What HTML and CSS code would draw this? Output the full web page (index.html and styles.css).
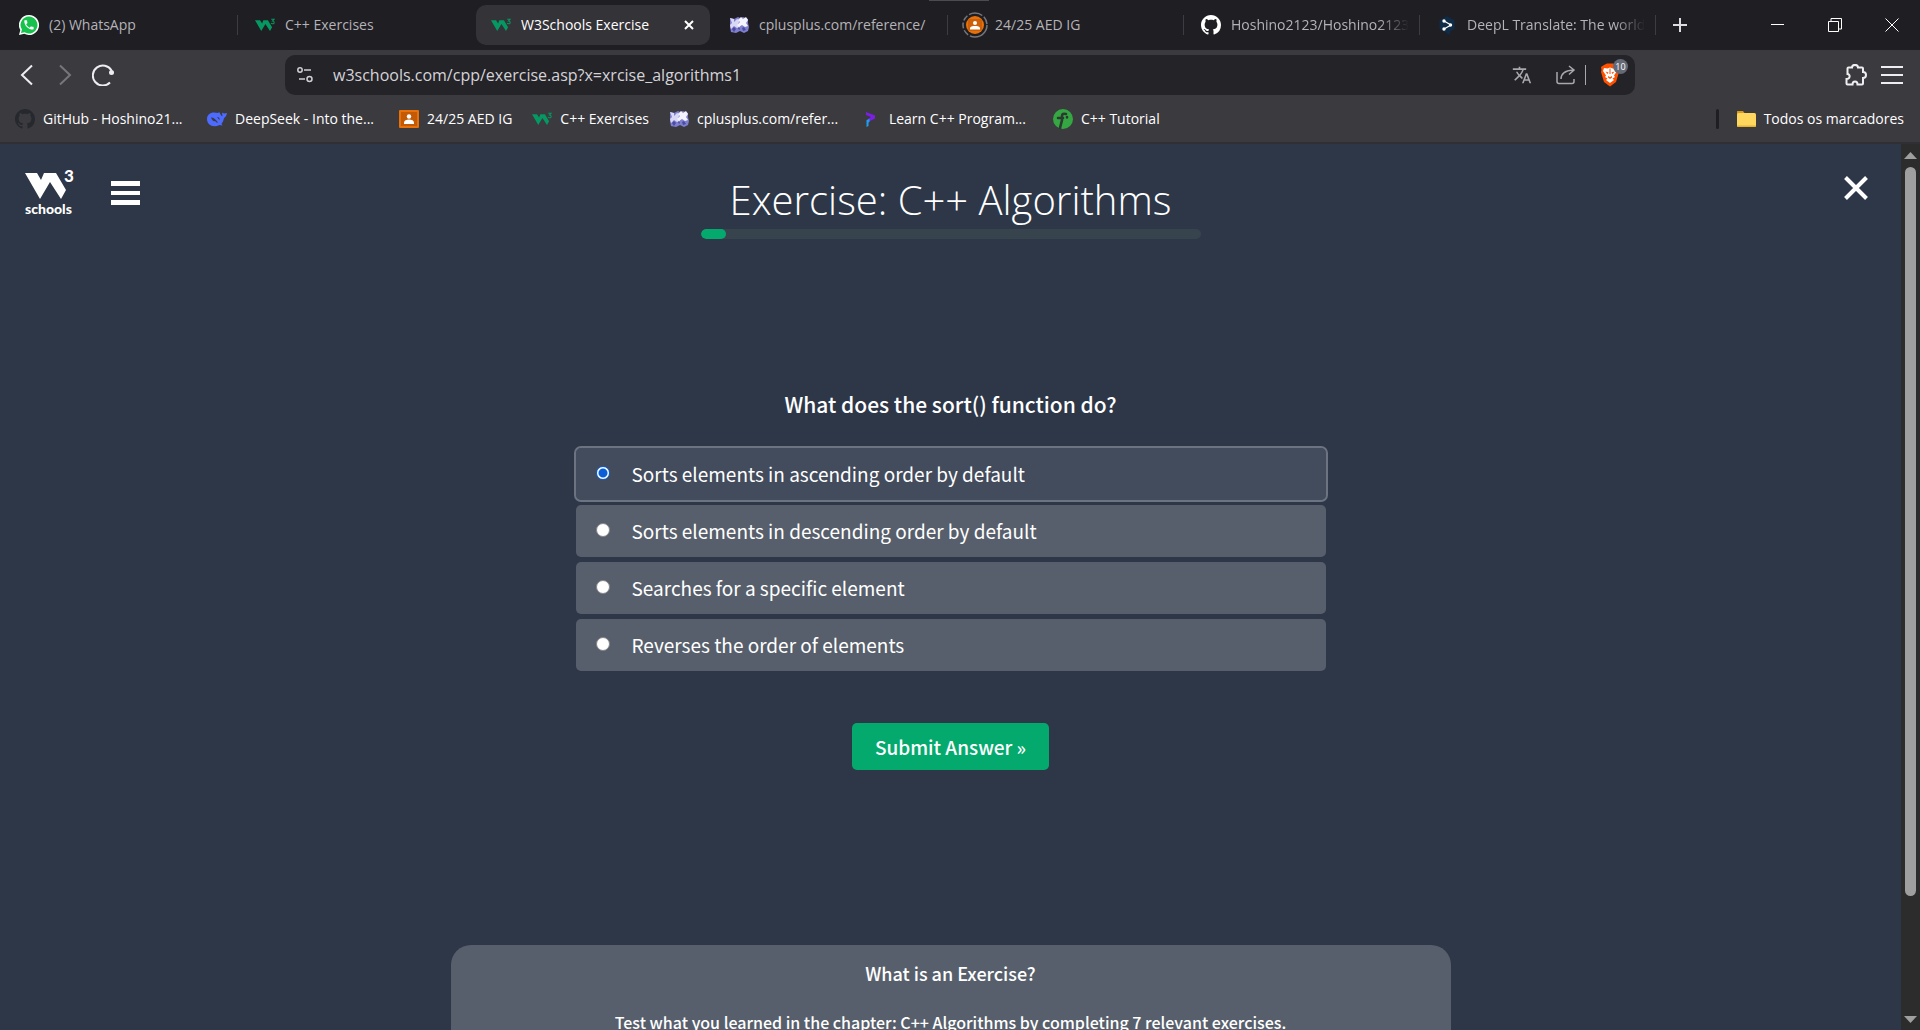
FILE: index.html
```html
<!DOCTYPE html>
<html lang="en">
<head>
<meta charset="utf-8">
<meta name="viewport" content="width=device-width, initial-scale=1">
<title>W3Schools Exercise</title>
<link rel="stylesheet" href="styles.css">
</head>
<body>
<svg class="sprite" aria-hidden="true">
  <symbol id="i-w3" viewBox="0 0 48 31"><path fill="#059862" d="M0 4h12l5 8 3-8h11l10 17-5 9-11-17-10 17z"/><path fill="none" stroke="#059862" stroke-width="2.500" d="M39 1.500h7l-4 4.500q4 0 4 3.500t-4 3q-2 0-3.500-1.500"/></symbol>
  <symbol id="i-github" viewBox="0 0 16 16"><path fill="currentColor" d="M8 0C3.58 0 0 3.58 0 8c0 3.54 2.29 6.53 5.47 7.59.4.07.55-.17.55-.38 0-.19-.01-.82-.01-1.49-2.01.37-2.53-.49-2.69-.94-.09-.23-.48-.94-.82-1.13-.28-.15-.68-.52-.01-.53.63-.01 1.08.58 1.23.82.72 1.21 1.87.87 2.33.66.07-.52.28-.87.51-1.07-1.78-.2-3.64-.89-3.64-3.95 0-.87.31-1.59.82-2.15-.08-.2-.36-1.02.08-2.12 0 0 .67-.21 2.2.82.64-.18 1.32-.27 2-.27s1.36.09 2 .27c1.53-1.04 2.2-.82 2.2-.82.44 1.1.16 1.92.08 2.12.51.56.82 1.27.82 2.15 0 3.07-1.87 3.75-3.65 3.95.29.25.54.73.54 1.48 0 1.07-.01 1.93-.01 2.2 0 .21.15.46.55.38A8.01 8.01 0 0 0 16 8c0-4.42-3.58-8-8-8z"/></symbol>
  <symbol id="i-cplus" viewBox="0 0 20 18">
    <path fill="#7f7fd0" d="M1 2l4 1 4-2 2 1 3-1 5 2v4l1 4-1 4-4 2-4-2-4 2-5-1-1-5z"/>
    <path fill="#d9d9f6" d="M1 2l4 1v3l3-3 3 1-2 4 2 3-3 1-3-2-3 3-1-4 2-2z"/>
    <path fill="#f4f4ff" d="M9 4l3-3 2 2 3-2 2 3-2 3 2 3-3 1-3-2-3 2-2-2 3-3z"/>
    <path fill="#4b4ba0" d="M3 13l2-2 2 2-2 3zM13 12l2-1 2 3-3 1zM9 12l1-1 1 2-1 1z"/>
  </symbol>
  <symbol id="i-class" viewBox="0 0 20 18"><rect width="20" height="18" rx="1" fill="#e8710a"/><rect x="2" y="2" width="16" height="14" fill="#c45a06"/><circle cx="10" cy="6.500" r="2.200" fill="#fff"/><path fill="#fff" d="M5 14v-1.500c0-2 2.500-3 5-3s5 1 5 3V14z"/></symbol>
</svg>

<header class="browser">
  <div class="tabstrip">
    <span class="grip"></span>
    <nav class="tabs" aria-label="Tabs">
      <a class="tab ruled" href="#">
        <svg class="fav" viewBox="0 0 20 20"><path fill="#fff" d="M10 0a10 10 0 1 1-4.700 18.800L0 20l1.300-5A10 10 0 0 1 10 0z"/><path fill="#16c14c" d="M10 1.500a8.500 8.500 0 1 1-4.400 15.800L2 18.100l.9-3.500A8.500 8.500 0 0 1 10 1.500z"/><g transform="translate(3.700 3.700) scale(.52)"><path fill="#fff" d="M6.620 10.790c1.440 2.830 3.760 5.140 6.590 6.590l2.200-2.200c.27-.27.67-.36 1.020-.24 1.120.37 2.330.57 3.570.57.55 0 1 .45 1 1V20c0 .55-.45 1-1 1-9.390 0-17-7.610-17-17 0-.55.45-1 1-1h3.500c.55 0 1 .45 1 1 0 1.250.2 2.450.57 3.570.11.35.03.74-.25 1.020l-2.200 2.200z"/></g></svg>
        <span class="tab-title">(2) WhatsApp</span>
      </a>
      <a class="tab" href="#">
        <svg class="fav"><use href="#i-w3"/></svg>
        <span class="tab-title">C++ Exercises</span>
      </a>
      <a class="tab active" href="#" aria-current="page">
        <svg class="fav"><use href="#i-w3"/></svg>
        <span class="tab-title">W3Schools Exercise</span>
        <svg class="tab-close" viewBox="0 0 10 10"><path d="M1 1l8 8M9 1L1 9"/></svg>
      </a>
      <a class="tab ruled" href="#">
        <svg class="fav"><use href="#i-cplus"/></svg>
        <span class="tab-title">cplusplus.com/reference/</span>
      </a>
      <a class="tab ruled" href="#">
        <svg class="fav fav-ring" viewBox="0 0 26 26"><circle cx="13" cy="13" r="12" fill="none" stroke="#77767b" stroke-width="1.500" stroke-dasharray="24 2 6 2 6 2 6 2 14 2 8 2"/><circle cx="13" cy="13" r="9" fill="#e8710a"/><rect x="6" y="7" width="14" height="12" rx="2" fill="#cc5f08"/><circle cx="13" cy="11" r="2" fill="#fff"/><path fill="#fff" d="M8 17.500v-1c0-2 2.500-2.500 5-2.500s5 .5 5 2.500v1z"/></svg>
        <span class="tab-title">24/25 AED IG</span>
      </a>
      <a class="tab ruled" href="#">
        <svg class="fav gh-light"><use href="#i-github"/></svg>
        <span class="tab-title fade">Hoshino2123/Hoshino2123</span>
      </a>
      <a class="tab ruled" href="#">
        <svg class="fav" viewBox="0 0 20 20"><path fill="#0f2b46" d="M10 1l7.500 4.300v8.700L13 16.600V20l-3.500-2L2.500 14V5.300z"/><path d="M7 6l7 4-7 4" fill="none" stroke="#fff" stroke-width="1.200"/><circle cx="7" cy="6" r="1.700" fill="#fff"/><circle cx="13.500" cy="10" r="1.700" fill="#fff"/><circle cx="7" cy="14" r="1.700" fill="#fff"/></svg>
        <span class="tab-title fade">DeepL Translate: The world</span>
      </a>
    </nav>
    <button class="new-tab" aria-label="New tab"><svg viewBox="0 0 14 14"><path d="M7 0v14M0 7h14"/></svg></button>
    <div class="window-controls">
      <button aria-label="Minimize"><svg viewBox="0 0 14 14"><path d="M0 6.500h13"/></svg></button>
      <button aria-label="Restore"><svg viewBox="0 0 14 14"><path d="M.5 3.500h10v10H.5zM3 3.500V.5h10.500V11h-3"/></svg></button>
      <button aria-label="Close window"><svg viewBox="0 0 14 14"><path d="M.5.5l13 13M13.500.5l-13 13"/></svg></button>
    </div>
  </div>

  <div class="toolbar">
    <div class="nav-buttons">
      <button aria-label="Back"><svg viewBox="0 0 22 22"><path d="M16 1.500L6 11l10 9.500"/></svg></button>
      <button aria-label="Forward" class="dim"><svg viewBox="0 0 22 22"><path d="M6 1.500L16 11 6 20.500"/></svg></button>
      <button aria-label="Reload"><svg viewBox="0 0 22 22"><path d="M19.500 6.500A10 10 0 1 0 18 18.500"/><circle cx="19.500" cy="8.500" r="2.500" fill="currentColor" stroke="none"/></svg></button>
    </div>
    <div class="address">
      <svg class="site-icon" viewBox="0 0 16 16"><circle cx="3" cy="3" r="2.200"/><path d="M7 3h7M2 12h6"/><circle cx="12.500" cy="12" r="2.500"/></svg>
      <input class="url" type="text" aria-label="Address" value="w3schools.com/cpp/exercise.asp?x=xrcise_algorithms1">
      <button class="addr-btn" aria-label="Translate"><svg class="solid" viewBox="0 0 24 24"><path d="M12.870 15.070l-2.540-2.510.03-.03c1.740-1.940 2.980-4.170 3.710-6.530H17V4h-7V2H8v2H1v1.990h11.170C11.500 7.920 10.440 9.750 9 11.350 8.070 10.320 7.300 9.190 6.690 8h-2c.73 1.630 1.730 3.170 2.980 4.560l-5.090 5.020L4 19l5-5 3.110 3.110.76-2.040zM18.500 10h-2L12 22h2l1.120-3h4.750L21 22h2l-4.500-12zm-2.620 7l1.620-4.330L19.120 17h-3.240z"/></svg></button>
      <button class="addr-btn share" aria-label="Share"><svg viewBox="0 0 20 20"><path d="M1 7v9.500q0 2 2 2h13q2 0 2-2V14M5 14q0-8 12-9M13 1l5 4-5 4.500"/></svg></button>
      <span class="addr-rule"></span>
      <button class="addr-btn shield" aria-label="Shields">
        <svg viewBox="0 0 20 24"><path fill="#ff5000" d="M4 2l3-1.500h6L16 2l3 2-.5 3 .5 2-3 10-6 4.500L4 19 1 9l.5-2L1 4z"/><path fill="#fff" d="M4 5l3.500.5L10 4.500l2.500 1L16 5l1 3-3 4.500 1 1.500-2.500 1.500L14 17l-4 3-4-3 1.500-1.500L5 14l1-1.500L3 8z"/><path fill="#ff5000" d="M5.500 8.500l3 1-1 1.500zM14.500 8.500l-3 1 1 1.500zM8 13l2 1.300L12 13v1.500l-2 1.500-2-1.500zM9.500 5.500h1V11h-1z"/></svg>
        <span class="badge">10</span>
      </button>
    </div>
    <div class="menu-buttons">
      <button aria-label="Extensions"><svg viewBox="0 0 22 22"><path d="M2.500 4.500q0-1 1-1H7C7 0 13 0 13 3.500h4q1 0 1 1V8c4 0 4 6 0 6v5.500q0 1-1 1h-4.500c0-4-5-4-5 0H2.500q-1 0-1-1V15c4 0 4-5 1-5z"/></svg></button>
      <button aria-label="Menu"><svg viewBox="0 0 22 22"><path d="M0 3h22M0 11h22M0 19h22"/></svg></button>
    </div>
  </div>

  <nav class="bookmarks" aria-label="Bookmarks">
    <a class="mark wide" href="#"><svg class="fav gh-dark"><use href="#i-github"/></svg>GitHub - Hoshino21...</a>
    <a class="mark wide" href="#"><svg class="fav" viewBox="0 0 20 16"><path fill="#4d6bfe" d="M0 8c0-4 3-6.500 7-6.500l4 .5c1-1 1.500-1 2 .5 1 2 2 3 2.500 2.500C15 3 15 2 15.500 1.500c1 1.500 2.500 1 4.500.5-.5 3-2 4.500-3 5-.5 3-1.500 4.500-2.500 5.500l1 2-3-.5C6 17 0 14 0 8z"/><path fill="#3b3a3f" d="M4 6.500c3-.5 5 2.500 7 5-1.500.5-2-.5-3-1.500-1 1-3-.5-4-3.500zM10 6l2 .5 1 2.500-1.500-1z"/></svg>DeepSeek - Into the...</a>
    <a class="mark" href="#"><svg class="fav"><use href="#i-class"/></svg>24/25 AED IG</a>
    <a class="mark" href="#"><svg class="fav"><use href="#i-w3"/></svg>C++ Exercises</a>
    <a class="mark wide" href="#"><svg class="fav"><use href="#i-cplus"/></svg>cplusplus.com/refer...</a>
    <a class="mark wide" href="#"><svg class="fav" viewBox="0 0 20 20"><path fill="#7b1fe8" d="M5 3l9 3.500v3L7 13v-3l3-2-5-2z"/><path fill="#1c9ff0" d="M5.500 11l3-1v3l-1 .500V17l-2 1z"/></svg>Learn C++ Program...</a>
    <a class="mark" href="#"><svg class="fav" viewBox="0 0 20 20"><circle cx="10" cy="10" r="10" fill="#35a742"/><path d="M7 19l2-8V7q0-3 4-2M5 9h5M14 8v.5" fill="none" stroke="#2b3a30" stroke-width="2.600" stroke-linecap="round"/></svg>C++ Tutorial</a>
    <span class="mark-rule"></span>
    <a class="mark all" href="#"><svg class="fav" viewBox="0 0 20 18"><path fill="#d99a1b" d="M1 1.500Q1 1 1.500 1H7l1.500 2H18v4H1z"/><rect x="1" y="3" width="19" height="14" rx="1.500" fill="#ffd75e"/><path fill="#e8b32e" d="M1 15.500h19q0 1.500-1.500 1.500h-16Q1 17 1 15.500z"/></svg>Todos os marcadores</a>
  </nav>
</header>

<div class="viewport">
  <main class="page">
    <header class="page-head">
      <div class="brand">
        <a class="logo" href="#" aria-label="W3Schools"><svg viewBox="0 0 50 47"><path fill="#fff" d="M0 4h12l4 7 3-7h12l10 17-5 9-11-17-10 17z"/><text x="39" y="13" class="logo-three" fill="#fff">3</text><text x="0" y="45" class="logo-word" fill="#fff">schools</text></svg></a>
        <button class="burger" aria-label="Menu"><svg viewBox="0 0 29 24"><path fill="#fff" d="M0 0h29v5H0zM0 10h29v4H0zM0 19h29v5H0z"/></svg></button>
      </div>
      <div class="heading">
        <h1>Exercise: C++ Algorithms</h1>
        <div class="progress" role="progressbar" aria-label="Progress" aria-valuenow="5" aria-valuemin="0" aria-valuemax="100"><span class="progress-fill" style="width: 5%"></span></div>
      </div>
      <button class="close" aria-label="Close exercise"><svg viewBox="0 0 24 24"><path d="M1.500 1.500l21 21M22.500 1.500l-21 21"/></svg></button>
    </header>

    <form class="quiz">
      <h2>What does the sort() function do?</h2>
      <div class="options">
        <label class="option"><input type="radio" name="answer" checked><span>Sorts elements in ascending order by default</span></label>
        <label class="option"><input type="radio" name="answer"><span>Sorts elements in descending order by default</span></label>
        <label class="option"><input type="radio" name="answer"><span>Searches for a specific element</span></label>
        <label class="option"><input type="radio" name="answer"><span>Reverses the order of elements</span></label>
      </div>
      <button class="submit" type="button">Submit Answer »</button>
    </form>

    <section class="about">
      <h3>What is an Exercise?</h3>
      <p>Test what you learned in the chapter: C++ Algorithms by completing 7 relevant exercises.</p>
    </section>
  </main>
  <div class="scrollbar" aria-hidden="true">
    <svg viewBox="0 0 13 7"><path d="M6.500 0L13 7H0z"/></svg>
    <span class="track"><span class="thumb"></span></span>
    <svg viewBox="0 0 13 7"><path d="M0 0h13L6.500 7z"/></svg>
  </div>
</div>
</body>
</html>
```

FILE: styles.css
```css
* { box-sizing: border-box; }

body {
  margin: 0;
  height: 100vh;
  display: flex;
  flex-direction: column;
  overflow: hidden;
  background: #2d3748;
  color: #fff;
  font-family: "Open Sans", "Noto Sans", sans-serif;
  font-size: 14px;
}

a { color: inherit; text-decoration: none; }

button {
  padding: 0;
  border: 0;
  background: none;
  color: inherit;
  font: inherit;
  display: flex;
  align-items: center;
  justify-content: center;
}

.sprite { position: absolute; width: 0; height: 0; }
.fav { flex: none; width: 20px; height: 20px; }

/* Tab strip */
.tabstrip {
  position: relative;
  display: flex;
  height: 50px;
  padding-left: 2px;
  background: #1f1e23;
}
.grip {
  position: absolute;
  top: 0;
  left: 929px;
  width: 60px;
  height: 1px;
  background: #4c4b50;
}
.tabs { display: flex; flex: 0 1 1654px; min-width: 0; }
.tab {
  flex: 1 1 0;
  min-width: 0;
  display: flex;
  align-items: center;
  gap: 10px;
  padding-left: 17px;
  color: #b4b3b8;
}
.tab::after {
  content: "";
  flex: none;
  width: 1px;
  height: 20px;
}
.tab.ruled::after { background: #3d3c42; }
.tab.active {
  margin: 5px 2px;
  padding-left: 15px;
  border-radius: 10px;
  background: #343338;
  color: #fff;
}
.tab-title { flex: 1; min-width: 0; overflow: hidden; white-space: nowrap; line-height: 20px; }
.tab-title.fade {
  mask-image: linear-gradient(to right, #000 calc(100% - 30px), transparent);
}
.tab-close { width: 10px; height: 10px; margin-right: 5px; stroke: #fff; stroke-width: 2; }
.gh-light { color: #fff; }
.gh-dark { color: #25292e; }
.fav-ring { width: 26px; height: 26px; margin: 0 -3px; }

.new-tab { width: 48px; }
.new-tab svg { width: 14px; height: 14px; stroke: #dddce0; stroke-width: 2; }
.window-controls { display: flex; margin-left: auto; }
.window-controls button { width: 57px; }
.window-controls svg { width: 14px; height: 14px; fill: none; stroke: #fff; stroke-width: 1; }

/* Toolbar */
.toolbar {
  display: grid;
  grid-template-columns: 285px 1fr 285px;
  height: 45px;
  padding-top: 5px;
  background: #3b3a3f;
}
.nav-buttons { display: flex; padding-left: 8px; }
.nav-buttons button { width: 38px; }
.nav-buttons svg,
.menu-buttons svg { width: 22px; height: 22px; fill: none; stroke: currentColor; stroke-width: 2; color: #eeedf0; }
.nav-buttons .dim svg { color: #77767b; }
.address {
  display: flex;
  align-items: center;
  height: 40px;
  padding: 0 12px;
  border-radius: 10px;
  background: #242328;
}
.site-icon { width: 16px; height: 16px; fill: none; stroke: #d0cfd4; stroke-width: 1.5; }
.url {
  flex: 1;
  min-width: 0;
  height: 30px;
  margin-left: 20px;
  padding: 0;
  border: 0;
  outline: 0;
  background: none;
  color: #d4d3d8;
  font: 16px "Open Sans", "Noto Sans", sans-serif;
}
.addr-btn svg { width: 20px; height: 20px; fill: none; stroke: #a9a8ad; stroke-width: 1.5; }
.addr-btn svg.solid { fill: #a9a8ad; stroke: none; }
.addr-btn.share { margin-left: 24px; }
.addr-rule { width: 1px; height: 20px; margin: 0 14px 0 9px; background: #a9a8ad; }
.shield { position: relative; margin-right: 3px; }
.shield svg { height: 24px; stroke: none; }
.badge {
  position: absolute;
  top: -4px;
  left: 13px;
  width: 15px;
  height: 15px;
  border-radius: 8px;
  background: #656975;
  color: #fff;
  font-size: 9px;
  line-height: 15px;
}
.menu-buttons { display: flex; justify-content: flex-end; gap: 14px; padding-right: 17px; }

/* Bookmarks bar */
.bookmarks {
  display: flex;
  align-items: center;
  height: 49px;
  padding: 0 16px 0 15px;
  border-bottom: 2px solid #302f34;
  background: #3b3a3f;
}
.mark { display: flex; align-items: center; gap: 8px; margin-right: 20px; white-space: nowrap; line-height: 20px; }
.mark.wide { flex: 0 0 192px; margin-right: 0; }
.mark.all { margin-right: 0; }
.mark-rule { width: 3px; height: 20px; margin: 0 17px 0 auto; border-radius: 2px; background: #1f1e23; }

/* Web page */
.viewport { flex: 1; min-height: 0; display: flex; }
.page { flex: 1; min-width: 0; overflow: hidden; }
.page-head {
  display: grid;
  grid-template-columns: 1fr 500px 1fr;
  align-items: start;
  padding: 25px 25px 0;
}
.brand { display: flex; align-items: center; gap: 36px; }
.logo svg { display: block; width: 50px; height: 47px; }
.logo-three { font: 900 17px Lato, sans-serif; }
.logo-word { font: 900 14px Lato, sans-serif; }
.burger svg { width: 29px; height: 24px; }
.heading { padding-top: 2px; text-align: center; }
h1 { margin: 0; font-size: 40px; font-weight: 300; line-height: 58px; }
.progress { height: 10px; border-radius: 5px; background: #38444d; overflow: hidden; }
.progress-fill { display: block; height: 100%; border-radius: 5px; background: #04aa6d; }
.close { justify-self: end; margin: 7px 8px 0 0; }
.close svg { width: 24px; height: 24px; stroke: #fff; stroke-width: 4; }

.quiz, .about {
  font-family: "Noto Sans CJK SC", "Noto Sans", sans-serif;
}
.quiz {
  display: flex;
  flex-direction: column;
  align-items: center;
  margin-top: 150px;
}
h2 { margin: 0 0 29px; font-size: 21px; font-weight: 500; line-height: 30px; }
.options { display: flex; flex-direction: column; gap: 5px; width: 100%; max-width: 750px; }
.option {
  display: flex;
  align-items: center;
  gap: 22px;
  padding: 12px 20px;
  border-radius: 5px;
  background: #585f6c;
  font-size: 19px;
  line-height: 28px;
}
.option:has(:checked) { background: #434c5c; outline: 2px solid #6d7481; }
.option input {
  appearance: none;
  flex: none;
  width: 14px;
  height: 14px;
  margin: 0 0 2px;
  border: 1px solid #85858a;
  border-radius: 50%;
  background: #fff;
}
.option input:checked { border-color: #0a5fd8; background: radial-gradient(circle, #0a5fd8 4px, #fff 5px); }
.submit {
  margin-top: 52px;
  padding: 10px 23px;
  border-radius: 5px;
  background: #04aa6d;
  font-size: 19px;
  font-weight: 500;
  line-height: 27px;
}
.about {
  max-width: 1000px;
  margin: 175px auto 0;
  padding: 15px 20px 40px;
  border-radius: 20px;
  background: #585f6c;
  text-align: center;
}
h3 { margin: 0 0 24px; font-size: 18px; font-weight: 500; line-height: 26px; }
.about p { margin: 0; font-size: 16px; font-weight: 500; line-height: 24px; }

/* Scrollbar */
.scrollbar {
  flex: none;
  width: 19px;
  display: flex;
  flex-direction: column;
  align-items: center;
  gap: 8px;
  padding: 8px 0 7px;
  background: #2c2c2c;
}
.scrollbar svg { flex: none; width: 13px; height: 7px; fill: #9f9f9f; }
.track { flex: 1; display: flex; flex-direction: column; }
.track::after { content: ""; flex: 2; }
.thumb { flex: 13; width: 11px; border-radius: 6px; background: #9f9f9f; }
```
